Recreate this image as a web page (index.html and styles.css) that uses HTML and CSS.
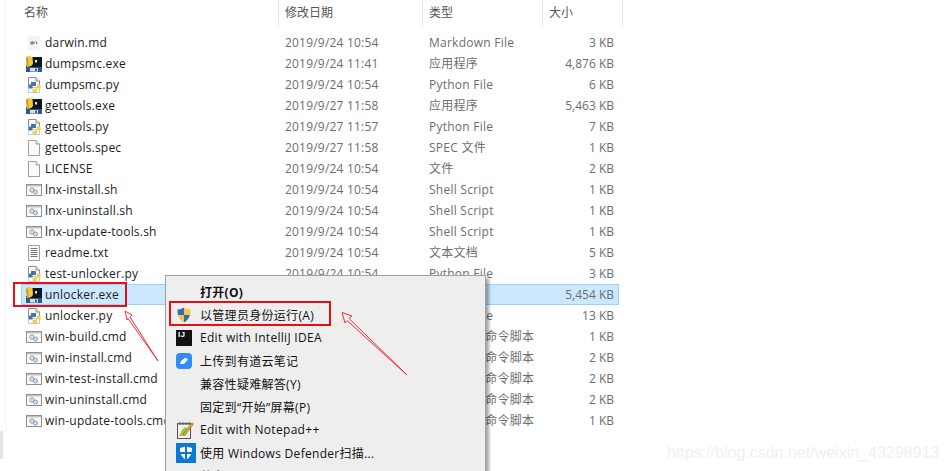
FILE: index.html
```html
<!DOCTYPE html>
<html lang="en">
<head>
    <meta charset="UTF-8">
    <meta name="viewport" content="width=device-width, initial-scale=1.0">
    <title>unlocker</title>
    <link rel="stylesheet" href="styles.css">
</head>
<body>
    <svg class="defs" width="0" height="0">
        <symbol id="i-exe" viewBox="0 0 16 16">
            <rect x="0" y="9" width="16" height="7" fill="#2c5c8c"/>
            <rect x="3" y="1" width="13" height="10" fill="#0f1620"/>
            <path d="M0 2 C0 0.3 2 -0.2 3.5 0.3 L6.5 1 L7 7 C7 9.5 4.5 10.5 3 10.5 L1 11 Z" fill="#f4c93c"/>
            <path d="M0 2 L2 1.5 L2.5 9 L1 11 Z" fill="#c99a1e"/>
            <rect x="9" y="4" width="2" height="2.5" fill="#e8e8e8"/>
            <rect x="4" y="12" width="8" height="3.5" fill="#d5dce2"/>
            <rect x="9" y="12.5" width="2" height="2.5" fill="#4a6a88"/>
        </symbol>
        <symbol id="i-py" viewBox="0 0 16 16">
            <path d="M2.5 0.5 H10 L13.5 4 V11 H2.5 Z" fill="#fdfdfd" stroke="#8f8f8f"/>
            <path d="M2.5 11 V15.5 H13.5 V11" fill="#fff" stroke="#c8c8c8"/>
            <path d="M10 0.5 V4 H13.5" fill="#e6e6e6" stroke="#8f8f8f"/>
            <path d="M5 5 H10 V9 H6.5 V11.5 H3 V7.5 H5 Z" fill="#3f78ab"/>
            <path d="M11 7.5 H14.5 V11.5 H11 V15 H6.5 V12 H9.5 V10 H11 Z" fill="#f6cf46"/>
        </symbol>
        <symbol id="i-doc" viewBox="0 0 16 16">
            <path d="M2.5 0.5 H10 L13.5 4 V15.5 H2.5 Z" fill="#fbfbfb" stroke="#9f9f9f"/>
            <path d="M10 0.5 V4 H13.5" fill="#efefef" stroke="#9f9f9f"/>
        </symbol>
        <symbol id="i-txt" viewBox="0 0 16 16">
            <path d="M2.5 0.5 H13.5 V15.5 H2.5 Z" fill="#fbfbfb" stroke="#9f9f9f"/>
            <path d="M4.5 3.5 H11.5 M4.5 5.5 H11.5 M4.5 7.5 H11.5 M4.5 9.5 H11.5 M4.5 11.5 H11.5" stroke="#777" fill="none"/>
        </symbol>
        <symbol id="i-md" viewBox="0 0 16 16">
            <path d="M2.5 0.5 H13.5 V15.5 H2.5 Z" fill="#f3f3f3"/>
            <path d="M5 7 H7 V9 H5 Z M8 6.5 V9 M10 6.5 L11 9" stroke="#666" fill="none"/>
        </symbol>
        <symbol id="i-sh" viewBox="0 0 16 16">
            <rect x="0.5" y="2.5" width="15" height="11" fill="#fafafa" stroke="#8f8f8f"/>
            <rect x="1" y="3" width="14" height="1.5" fill="#c4c4c4"/>
            <circle cx="6" cy="8" r="2.2" fill="#e4e4e4" stroke="#8d9aa5"/>
            <circle cx="9.5" cy="10" r="2" fill="#d7e6f2" stroke="#7d9db5"/>
        </symbol>
        <symbol id="i-shield" viewBox="0 0 16 16">
            <path d="M8 0.5 C10 2 12.5 2.5 14.5 2.5 C14.8 9 12.5 13 8 15.5 C3.5 13 1.2 9 1.5 2.5 C3.5 2.5 6 2 8 0.5 Z" fill="#f6c53a"/>
            <path d="M8 0.5 C6 2 3.5 2.5 1.5 2.5 C1.5 4.5 1.7 6.3 2.2 8 H8 Z" fill="#2b6fc4"/>
            <path d="M8 8 H13.8 C13 11.2 11 13.8 8 15.5 Z" fill="#2b6fc4"/>
        </symbol>
        <symbol id="i-note" viewBox="0 0 18 18">
            <rect x="1.5" y="2.5" width="13" height="15" fill="#f2f2f2" stroke="#555"/>
            <path d="M2 3 H14 M4 1 V4 M7 1 V4 M10 1 V4 M13 1 V4" stroke="#666" fill="none"/>
            <path d="M3 15 C5 12 5 9 9 6 L12 8 L9 15 Z" fill="#9cc63e"/>
            <path d="M7 13 L16 1.5 L17.5 3 L9 14.5 Z" fill="#e2a52c" stroke="#8a5a14" stroke-width="0.5"/>
        </symbol>
    </svg>

    <div class="explorer">
        <header class="file-head">
            <span class="caret"></span>
            <div class="col-name">名称</div>
            <div class="col-date">修改日期</div>
            <div class="col-type">类型</div>
            <div class="col-size">大小</div>
        </header>
        <div class="file-list">
            <div class="file-row"><svg class="ficon"><use href="#i-md"/></svg><span class="fname">darwin.md</span><span class="fdate">2019/9/24 10:54</span><span class="ftype">Markdown File</span><span class="fsize">3 KB</span></div>
            <div class="file-row"><svg class="ficon"><use href="#i-exe"/></svg><span class="fname">dumpsmc.exe</span><span class="fdate">2019/9/24 11:41</span><span class="ftype">应用程序</span><span class="fsize">4,876 KB</span></div>
            <div class="file-row"><svg class="ficon"><use href="#i-py"/></svg><span class="fname">dumpsmc.py</span><span class="fdate">2019/9/24 10:54</span><span class="ftype">Python File</span><span class="fsize">6 KB</span></div>
            <div class="file-row"><svg class="ficon"><use href="#i-exe"/></svg><span class="fname">gettools.exe</span><span class="fdate">2019/9/27 11:58</span><span class="ftype">应用程序</span><span class="fsize">5,463 KB</span></div>
            <div class="file-row"><svg class="ficon"><use href="#i-py"/></svg><span class="fname">gettools.py</span><span class="fdate">2019/9/27 11:57</span><span class="ftype">Python File</span><span class="fsize">7 KB</span></div>
            <div class="file-row"><svg class="ficon"><use href="#i-doc"/></svg><span class="fname">gettools.spec</span><span class="fdate">2019/9/27 11:58</span><span class="ftype">SPEC 文件</span><span class="fsize">1 KB</span></div>
            <div class="file-row"><svg class="ficon"><use href="#i-doc"/></svg><span class="fname">LICENSE</span><span class="fdate">2019/9/24 10:54</span><span class="ftype">文件</span><span class="fsize">2 KB</span></div>
            <div class="file-row"><svg class="ficon"><use href="#i-sh"/></svg><span class="fname">lnx-install.sh</span><span class="fdate">2019/9/24 10:54</span><span class="ftype">Shell Script</span><span class="fsize">1 KB</span></div>
            <div class="file-row"><svg class="ficon"><use href="#i-sh"/></svg><span class="fname">lnx-uninstall.sh</span><span class="fdate">2019/9/24 10:54</span><span class="ftype">Shell Script</span><span class="fsize">1 KB</span></div>
            <div class="file-row"><svg class="ficon"><use href="#i-sh"/></svg><span class="fname">lnx-update-tools.sh</span><span class="fdate">2019/9/24 10:54</span><span class="ftype">Shell Script</span><span class="fsize">1 KB</span></div>
            <div class="file-row"><svg class="ficon"><use href="#i-txt"/></svg><span class="fname">readme.txt</span><span class="fdate">2019/9/24 10:54</span><span class="ftype">文本文档</span><span class="fsize">5 KB</span></div>
            <div class="file-row"><svg class="ficon"><use href="#i-py"/></svg><span class="fname">test-unlocker.py</span><span class="fdate">2019/9/24 10:54</span><span class="ftype">Python File</span><span class="fsize">3 KB</span></div>
            <div class="file-row selected"><svg class="ficon"><use href="#i-exe"/></svg><span class="fname">unlocker.exe</span><span class="fdate">2019/9/24 10:54</span><span class="ftype">应用程序</span><span class="fsize">5,454 KB</span></div>
            <div class="file-row"><svg class="ficon"><use href="#i-py"/></svg><span class="fname">unlocker.py</span><span class="fdate">2019/9/24 10:54</span><span class="ftype">Python File</span><span class="fsize">13 KB</span></div>
            <div class="file-row"><svg class="ficon"><use href="#i-sh"/></svg><span class="fname">win-build.cmd</span><span class="fdate">2019/9/24 10:54</span><span class="ftype">Windows 命令脚本</span><span class="fsize">1 KB</span></div>
            <div class="file-row"><svg class="ficon"><use href="#i-sh"/></svg><span class="fname">win-install.cmd</span><span class="fdate">2019/9/24 10:54</span><span class="ftype">Windows 命令脚本</span><span class="fsize">2 KB</span></div>
            <div class="file-row"><svg class="ficon"><use href="#i-sh"/></svg><span class="fname">win-test-install.cmd</span><span class="fdate">2019/9/24 10:54</span><span class="ftype">Windows 命令脚本</span><span class="fsize">2 KB</span></div>
            <div class="file-row"><svg class="ficon"><use href="#i-sh"/></svg><span class="fname">win-uninstall.cmd</span><span class="fdate">2019/9/24 10:54</span><span class="ftype">Windows 命令脚本</span><span class="fsize">2 KB</span></div>
            <div class="file-row"><svg class="ficon"><use href="#i-sh"/></svg><span class="fname">win-update-tools.cmd</span><span class="fdate">2019/9/24 10:54</span><span class="ftype">Windows 命令脚本</span><span class="fsize">1 KB</span></div>
        </div>
    </div>

    <div class="scroll-stub"></div>

    <div class="context-menu">
        <div class="menu-item strong"><span class="micon"></span>打开(O)</div>
        <div class="menu-item"><span class="micon"><svg width="16" height="16"><use href="#i-shield"/></svg></span>以管理员身份运行(A)</div>
        <div class="menu-item"><span class="micon"><span class="ij-logo">IJ</span></span>Edit with IntelliJ IDEA</div>
        <div class="menu-item"><span class="micon"><svg width="16" height="16" viewBox="0 0 16 16"><rect width="16" height="16" rx="4" fill="#2f8cf6"/><path d="M4 11 L5 8 L9.5 4.5 L12 6.5 L8 11 Z" fill="#fff"/></svg></span>上传到有道云笔记</div>
        <div class="menu-item"><span class="micon"></span>兼容性疑难解答(Y)</div>
        <div class="menu-item"><span class="micon"></span>固定到“开始”屏幕(P)</div>
        <div class="menu-item"><span class="micon"><svg width="18" height="18"><use href="#i-note"/></svg></span>Edit with Notepad++</div>
        <div class="menu-item"><span class="micon"><svg width="20" height="20" viewBox="0 0 20 20"><rect width="20" height="20" fill="#0a78d4"/><path d="M10 3 C12 4.2 14 4.8 16 4.8 C16.2 10.5 14.2 14.5 10 17 C5.8 14.5 3.8 10.5 4 4.8 C6 4.8 8 4.2 10 3 Z" fill="#fff"/><path d="M9 3 H11 V17 H9 Z M3.5 9 H16.5 V11 H3.5 Z" fill="#0a78d4"/></svg></span>使用 Windows Defender扫描...</div>
        <div class="menu-item"><span class="micon"><svg width="16" height="16" viewBox="0 0 16 16"><path d="M3 13 C3 8 6 6 10 6 V3 L14 7 L10 11 V8 C7 8 5 9 3 13 Z" fill="#444"/></svg></span>共享</div>
    </div>

    <!-- red marks drawn over the screenshot -->
    <div class="mark mark-file"></div>
    <div class="mark mark-run"></div>
    <svg class="arrows" width="948" height="471" viewBox="0 0 948 471">
        <path d="M158 361 L130 317 L132 315 L125 311 L127 320 L128 318.5 Z" fill="none" stroke="#f0303a" stroke-width="1"/>
        <path d="M407 375 L349 318.5 L352 316 L342 312.5 L345 323 L347 320.5 Z" fill="none" stroke="#f0303a" stroke-width="1"/>
    </svg>

    <div class="watermark">https://blog.csdn.net/weixin_43298913</div>
</body>
</html>
```
FILE: styles.css
```css
* {
    box-sizing: border-box;
}

html, body {
    height: 100%;
}

body {
    margin: 0;
    background: #fff;
    overflow: hidden;
    position: relative;
    font-family: "Open Sans", "Noto Sans CJK SC", sans-serif;
    font-size: 12px;
}

.defs {
    position: absolute;
}

.explorer {
    margin-left: 5px;
    width: 618px;
    border-left: 1px solid #f4f4f4;
}

.file-head {
    display: grid;
    grid-template-columns: 273px 144px 120px 80px;
    height: 26px;
    position: relative;
    color: #555;
    font-size: 12px;
    line-height: 25px;
}

.file-head > div {
    padding-left: 18px;
    border-right: 1px solid #e5e5e5;
}

.file-head .col-date,
.file-head .col-type,
.file-head .col-size {
    padding-left: 6px;
}

.caret {
    position: absolute;
    left: 141px;
    top: -3px;
    width: 5px;
    height: 5px;
    border-left: 1px solid #999;
    border-top: 1px solid #999;
    transform: rotate(45deg);
}

.file-list {
    padding-top: 6px;
}

.file-row {
    display: flex;
    align-items: center;
    height: 21px;
    margin-left: 15px;
    width: 598px;
    line-height: 19px;
    border: 1px solid transparent;
    color: #1c1c1c;
}

.file-row.selected {
    background: #cce8ff;
    border-color: #99d1ff;
}

.ficon {
    width: 16px;
    height: 16px;
    margin-left: 4px;
    flex: none;
}

.fname {
    width: 240px;
    margin-left: 3px;
    white-space: nowrap;
    letter-spacing: 0.2px;
}

.fdate {
    width: 144px;
    color: #6d6d6d;
    letter-spacing: 0.2px;
}

.ftype {
    width: 120px;
    color: #6d6d6d;
    white-space: nowrap;
    letter-spacing: 0.25px;
}

.fsize {
    width: 65px;
    text-align: right;
    color: #6d6d6d;
}

.scroll-stub {
    position: absolute;
    left: 0;
    top: 431px;
    width: 3px;
    height: 28px;
    background: #e4e4e4;
}

.context-menu {
    position: absolute;
    left: 165px;
    top: 275px;
    width: 321px;
    padding: 4px 2px 0 2px;
    background: #eeeeee;
    border: 1px solid #a0a0a0;
    border-bottom: none;
    box-shadow: 3px 3px 3px rgba(0, 0, 0, 0.35);
    color: #111;
    font-size: 12px;
    letter-spacing: 0.3px;
}

.menu-item {
    display: flex;
    align-items: center;
    height: 23px;
    white-space: nowrap;
}

.menu-item.strong {
    font-weight: 700;
}

.micon {
    width: 32px;
    padding-left: 8px;
    display: flex;
    align-items: center;
    flex: none;
}

.ij-logo {
    width: 16px;
    height: 16px;
    background: #111;
    color: #fff;
    font-size: 8px;
    font-weight: 700;
    line-height: 10px;
    padding-left: 2px;
    font-family: "Liberation Sans", sans-serif;
}

.mark {
    position: absolute;
    border: 2px solid #e60f16;
}

.mark-file {
    left: 13px;
    top: 282px;
    width: 114px;
    height: 25px;
}

.mark-run {
    left: 169px;
    top: 301px;
    width: 162px;
    height: 25px;
}

.arrows {
    position: absolute;
    left: 0;
    top: 0;
    pointer-events: none;
}

.watermark {
    position: absolute;
    left: 667px;
    top: 444px;
    font-family: "Liberation Sans", sans-serif;
    font-size: 16px;
    color: #f0f0f0;
}
```
